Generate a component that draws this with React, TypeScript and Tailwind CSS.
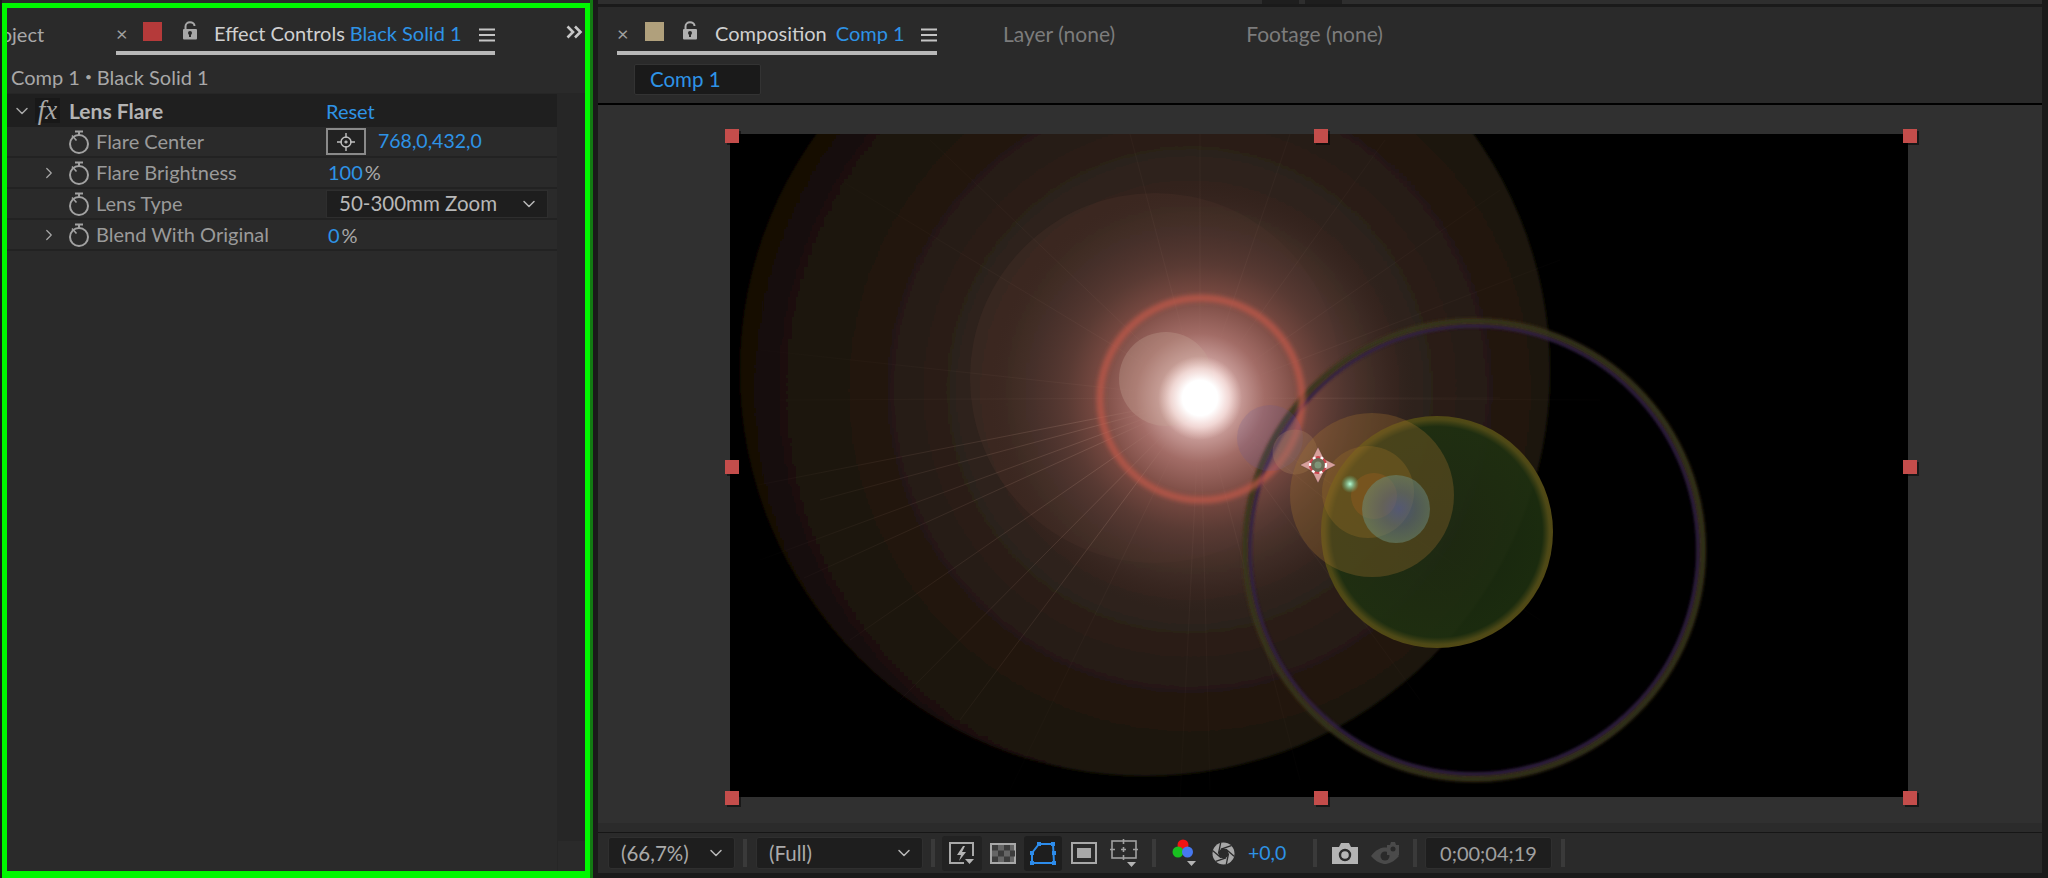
import { ChevronDown, ChevronRight } from "lucide-react";

const font = { fontFamily: "Lato, 'Noto Sans', sans-serif" };

function Hamburger() {
  return (
    <svg width="16" height="14" viewBox="0 0 16 14" className="mt-[6px] shrink-0">
      <path d="M0 1.500h16M0 7h16M0 12.500h16" stroke="#c4c4c4" strokeWidth="2" />
    </svg>
  );
}

function Lock({ color = "#a8a8a8" }: { color?: string }) {
  return (
    <svg width="16" height="19" viewBox="0 0 16 19" className="-mt-[3px] shrink-0">
      <path d="M3.500 9V5.500C3.500 3 5.500 1.200 8 1.200S12.500 3 12.500 5" fill="none" stroke={color} strokeWidth="2" />
      <rect x="1" y="8" width="14" height="10.500" rx="1" fill={color} />
      <circle cx="8" cy="12" r="2" fill="#2a2a2a" />
      <rect x="7" y="12" width="2" height="4" fill="#2a2a2a" />
    </svg>
  );
}

function Stopwatch() {
  return (
    <svg width="22" height="24" viewBox="0 0 22 24" className="shrink-0">
      <circle cx="11" cy="14" r="9" fill="none" stroke="#a2a2a2" strokeWidth="2" />
      <path d="M7 1.500h8M11 1.500v3.500" stroke="#a2a2a2" strokeWidth="2" />
      <path d="M8.500 10.500L4 5.500" stroke="#a2a2a2" strokeWidth="1.600" />
    </svg>
  );
}

function PropRow({
  label,
  twirl,
  children,
}: {
  label: string;
  twirl?: boolean;
  children: React.ReactNode;
}) {
  return (
    <div className="grid h-[31px] grid-cols-[319px_1fr] border-b-2 border-[#222222]">
      <div className="flex items-center pl-[36px]">
        <div className="flex w-[25px] items-center">
          {twirl && <ChevronRight size={18} strokeWidth={1.6} className="-ml-[3px] text-[#a8a8a8]" />}
        </div>
        <Stopwatch />
        <span className="mb-[1px] ml-[6px] text-[20px] leading-none text-[#9a9a9a]">{label}</span>
      </div>
      <div className="flex items-center">{children}</div>
    </div>
  );
}

function Sep({ className }: { className: string }) {
  return <div className={`h-[28px] w-[4px] shrink-0 bg-[#3a3a3a] ${className}`} />;
}

const handles = [
  "left-[-5px] top-[-5px]",
  "left-[584px] top-[-5px]",
  "left-[1173px] top-[-5px]",
  "left-[-5px] top-[326px]",
  "left-[1173px] top-[326px]",
  "left-[-5px] top-[657px]",
  "left-[584px] top-[657px]",
  "left-[1173px] top-[657px]",
];

const rays = [
  [758, 485], [804, 578], [760, 560], [820, 500], [850, 640], [900, 700], [960, 720],
  [1010, 790], [1180, 800], [1210, 790], [1300, 780], [1420, 700], [1540, 620], [1600, 400],
  [1500, 398], [1560, 260], [1500, 190], [1385, 140], [1290, 134], [1200, 134], [1130, 134],
  [930, 140], [840, 180], [760, 350], [780, 400], [1450, 600],
];

// six aperture blades, tangent to the hole
const blades = [0, 60, 120, 180, 240, 300].map((deg) => {
  const a = (deg * Math.PI) / 180;
  const b = ((deg + 75) * Math.PI) / 180;
  return `M${11.5 + 5 * Math.cos(a)} ${11.5 + 5 * Math.sin(a)}L${11.5 + 11 * Math.cos(b)} ${11.5 + 11 * Math.sin(b)}`;
});

function LensFlare() {
  return (
    <svg viewBox="730 134 1178 663" className="block h-full w-full">
      <defs>
        <radialGradient id="big" gradientUnits="userSpaceOnUse" cx="1190" cy="390" r="440">
          <stop offset="0" stopColor="#4a3029" />
          <stop offset="0.5" stopColor="#2e221c" />
          <stop offset="0.8" stopColor="#1e130b" />
          <stop offset="1" stopColor="#171006" />
        </radialGradient>
        <radialGradient id="core" gradientUnits="userSpaceOnUse" cx="1200" cy="398" r="215">
          <stop offset="0.1" stopColor="#e4bcb8" />
          <stop offset="0.2" stopColor="#c29490" />
          <stop offset="0.3" stopColor="#a26c66" />
          <stop offset="0.47" stopColor="#7a4a42" />
          <stop offset="0.62" stopColor="#5c3c35" stopOpacity="0.9" />
          <stop offset="0.85" stopColor="#45302a" stopOpacity="0.5" />
          <stop offset="1" stopColor="#3a2620" stopOpacity="0" />
        </radialGradient>
        <radialGradient id="white" gradientUnits="userSpaceOnUse" cx="1200" cy="398" r="42">
          <stop offset="0" stopColor="#ffffff" />
          <stop offset="0.42" stopColor="#ffffff" />
          <stop offset="0.7" stopColor="#fbe8e6" stopOpacity="0.7" />
          <stop offset="1" stopColor="#f0d4d0" stopOpacity="0" />
        </radialGradient>
        <radialGradient id="green" gradientUnits="userSpaceOnUse" cx="1437" cy="532" r="117">
          <stop offset="0" stopColor="#1c2c12" stopOpacity="0.8" />
          <stop offset="0.9" stopColor="#1e3010" stopOpacity="0.9" />
          <stop offset="0.96" stopColor="#4c4816" />
          <stop offset="1" stopColor="#554a14" />
        </radialGradient>
        <radialGradient id="blue" gradientUnits="userSpaceOnUse" cx="1399" cy="509" r="34">
          <stop offset="0" stopColor="#4a60b8" />
          <stop offset="0.5" stopColor="#566e88" />
          <stop offset="1" stopColor="#6a8a78" />
        </radialGradient>
        <radialGradient id="spot" gradientUnits="userSpaceOnUse" cx="1350" cy="484" r="9">
          <stop offset="0" stopColor="#b8ffd8" />
          <stop offset="1" stopColor="#60c090" stopOpacity="0" />
        </radialGradient>
        <radialGradient id="rayfade" gradientUnits="userSpaceOnUse" cx="1200" cy="398" r="480">
          <stop offset="0.1" stopColor="#c49a88" stopOpacity="0" />
          <stop offset="0.22" stopColor="#c49a88" stopOpacity="0.22" />
          <stop offset="1" stopColor="#c49a88" stopOpacity="0" />
        </radialGradient>
        <filter id="soft"><feGaussianBlur stdDeviation="1.500" /></filter>
        <filter id="softer"><feGaussianBlur stdDeviation="2" /></filter>
      </defs>
      <rect x="730" y="134" width="1178" height="663" fill="#000" />
      <circle cx="1145" cy="371" r="405" fill="url(#big)" filter="url(#soft)" />
      <circle cx="1155" cy="378" r="185" fill="#5a3c30" fillOpacity="0.22" />
      <circle cx="1200" cy="398" r="215" fill="url(#core)" />
      {rays.map(([x, y], i) => (
        <line key={i} x1="1200" y1="398" x2={x} y2={y} stroke="url(#rayfade)" strokeOpacity={i < 7 ? 1 : 0.3} strokeWidth="1" />
      ))}
      <circle cx="1474" cy="550" r="228" fill="none" stroke="#42341a" strokeOpacity="0.8" strokeWidth="8" filter="url(#soft)" />
      <circle cx="1474" cy="550" r="224" fill="none" stroke="#2f1f48" strokeWidth="3" filter="url(#soft)" />
      <circle cx="1474" cy="550" r="229" fill="none" stroke="#263820" strokeOpacity="0.8" strokeWidth="2" filter="url(#soft)" />
      <circle cx="1166" cy="379" r="47" fill="#c8a898" fillOpacity="0.3" />
      <circle cx="1200" cy="398" r="42" fill="url(#white)" />
      <circle cx="1201" cy="399" r="101" fill="none" stroke="#c2584a" strokeOpacity="0.72" strokeWidth="7" filter="url(#softer)" />
      <circle cx="1270" cy="438" r="33" fill="#6a5a96" fillOpacity="0.2" />
      <circle cx="1295" cy="452" r="22.500" fill="#b08860" fillOpacity="0.28" />
      <circle cx="1437" cy="532" r="116" fill="url(#green)" />
      <circle cx="1372" cy="495" r="82" fill="#a0702e" fillOpacity="0.32" />
      <circle cx="1368" cy="492" r="46" fill="#9a7028" fillOpacity="0.3" />
      <circle cx="1374" cy="496" r="23" fill="#a86020" fillOpacity="0.3" />
      <circle cx="1396" cy="509" r="34" fill="url(#blue)" fillOpacity="0.55" />
      <circle cx="1350" cy="484" r="9" fill="url(#spot)" />
      <g>
        <path d="M1318 447l6 12 12 6-12 6-6 12-6-12-12-6 12-6z" fill="#d8a09c" stroke="#2a1a1a" strokeOpacity="0.4" strokeWidth="0.6" />
        <circle cx="1318" cy="465" r="8" fill="#6b6b55" stroke="#c9444c" strokeWidth="2.200" />
        <circle cx="1318" cy="465" r="8" fill="none" stroke="#ffffff" strokeWidth="2.200" strokeDasharray="3 5" />
        <circle cx="1318" cy="465" r="3.500" fill="#7f9478" />
      </g>
    </svg>
  );
}

export default function App() {
  return (
    <div className="flex h-[878px] w-[2048px] overflow-hidden bg-[#1a1a1a]" style={font}>
      {/* Effect Controls panel */}
      <div className="ml-[2px] flex h-full w-[588px] shrink-0 flex-col">
        <div className="h-[3px] shrink-0 bg-[#2a2a2a]" />
        <div className="flex min-h-0 flex-1 flex-col overflow-hidden border-[5px] border-b-[7px] border-[#00f800] bg-[#2a2a2a]">
          <div className="flex h-[50px] shrink-0 items-start">
            <span className="ml-[-25px] mt-[13px] w-[134px] shrink-0 text-[20px] leading-[26px] text-[#a8a8a8]">Project</span>
            <div className="flex h-[47px] w-[379px] shrink-0 items-center border-b-4 border-[#b8b8b8] pb-[6px] pt-[10px]">
              <span className="mt-[3px] w-[27px] text-[20px] leading-none text-[#a0a0a0]">×</span>
              <div className="h-[19px] w-[19px] shrink-0 bg-[#b53a3a]" />
              <div className="ml-[20px]"><Lock /></div>
              <span className="ml-[16px] mt-[3px] whitespace-nowrap text-[20px] leading-none text-[#d0d0d0]">Effect Controls</span>
              <span className="ml-[5px] mt-[3px] whitespace-nowrap text-[20px] leading-none text-[#2e93e6]">Black Solid 1</span>
              <div className="ml-auto"><Hamburger /></div>
            </div>
            <svg width="17" height="14" viewBox="0 0 17 14" className="ml-[71px] mt-[17px] shrink-0">
              <path d="M1.500 1.500L7 7l-5.500 5.500M9 1.500L14.500 7 9 12.500" fill="none" stroke="#c8c8c8" strokeWidth="2.600" />
            </svg>
          </div>
          <div className="flex h-[36px] shrink-0 items-center border-b border-[#262626] pl-[4px] pt-[2px] text-[20px] text-[#a8a8a8]">
            Comp 1 <span className="mx-[5px] text-[12px]">•</span> Black Solid 1
          </div>
          <div className="flex min-h-0 flex-1">
            <div className="w-[550px] shrink-0">
              <div className="grid h-[33px] grid-cols-[319px_1fr] bg-[#1f1f1f]">
                <div className="flex items-center">
                  <ChevronDown size={20} strokeWidth={1.8} className="ml-[5px] text-[#a8a8a8]" />
                  <div className="ml-[3px] flex h-[25px] w-[25px] items-center justify-center bg-[#181818] text-[27px] italic leading-none text-[#a8a8a8]" style={{ fontFamily: "'Liberation Serif', serif" }}>
                    fx
                  </div>
                  <span className="ml-[9px] text-[21px] font-bold leading-none text-[#b4b4b4]">Lens Flare</span>
                </div>
                <div className="flex items-center text-[20px] leading-none text-[#2e93e6]">Reset</div>
              </div>
              <PropRow label="Flare Center">
                <div className="flex h-[27px] w-[40px] shrink-0 items-center justify-center border-2 border-[#8a8a8a] bg-[#222222]">
                  <svg width="18" height="18" viewBox="0 0 18 18">
                    <circle cx="9" cy="9" r="5" fill="none" stroke="#c0c0c0" strokeWidth="1.400" />
                    <path d="M0 9h5M13 9h5M9 0v5M9 13v5M7.400 9h3.200M9 7.400v3.200" stroke="#c0c0c0" strokeWidth="1.400" />
                  </svg>
                </div>
                <span className="mb-[1px] ml-[12px] text-[19.5px] leading-none text-[#2e93e6]">768,0,432,0</span>
              </PropRow>
              <PropRow label="Flare Brightness" twirl>
                <span className="mb-[1px] ml-[2px] text-[20px] leading-none text-[#2e93e6]">100</span>
                <span className="mb-[1px] ml-[2px] text-[20px] leading-none text-[#a8a8a8]">%</span>
              </PropRow>
              <PropRow label="Lens Type">
                <div className="flex h-[28px] w-[222px] items-center justify-between border border-[#2e2e2e] bg-[#1e1e1e] pl-[12px] pr-[8px]">
                  <span className="text-[20.5px] leading-none text-[#b8b8b8]">50-300mm Zoom</span>
                  <ChevronDown size={20} strokeWidth={1.8} className="text-[#b8b8b8]" />
                </div>
              </PropRow>
              <PropRow label="Blend With Original" twirl>
                <span className="ml-[2px] text-[20px] leading-none text-[#2e93e6]">0</span>
                <span className="ml-[2px] text-[20px] leading-none text-[#a8a8a8]">%</span>
              </PropRow>
            </div>
            <div className="flex flex-1 flex-col justify-end border-l border-[#262626] bg-[#262626]">
              <div className="h-[30px] bg-[#2a2a2a]" />
            </div>
          </div>
        </div>
      </div>
      <div className="h-full w-[3px] shrink-0 bg-[#127a12]" />

      {/* Composition panel */}
      <div className="ml-[5px] flex h-full w-[1444px] shrink-0 flex-col">
        <div className="flex h-[4px] shrink-0 bg-[#2e2e2e]">
          <div className="ml-[664px] h-full w-[37px] bg-[#1e1e1e]" />
          <div className="ml-[6px] h-full w-[37px] bg-[#1e1e1e]" />
        </div>
        <div className="h-[3px] shrink-0" />
        <div className="h-[96px] shrink-0 bg-[#2a2a2a]">
          <div className="flex h-[48px] items-start">
            <div className="ml-[19px] flex h-[48px] w-[320px] shrink-0 items-center border-b-4 border-[#b8b8b8] pb-[5px] pt-[10px]">
              <span className="mt-[3px] w-[28px] text-[20px] leading-none text-[#a0a0a0]">×</span>
              <div className="h-[19px] w-[19px] shrink-0 bg-[#b0a07c]" />
              <div className="ml-[18px]"><Lock color="#b0b0b0" /></div>
              <span className="ml-[17px] mt-[3px] text-[20px] leading-none text-[#d0d0d0]">Composition</span>
              <span className="ml-[9px] mt-[3px] whitespace-nowrap text-[20px] leading-none text-[#2e93e6]">Comp 1</span>
              <div className="ml-auto"><Hamburger /></div>
            </div>
            <span className="ml-[66px] mt-[16px] whitespace-nowrap text-[21px] leading-none text-[#7c7c7c]">Layer (none)</span>
            <span className="ml-[131px] mt-[16px] whitespace-nowrap text-[21px] leading-none text-[#7c7c7c]">Footage (none)</span>
          </div>
          <div className="ml-[36px] mt-[9px] flex h-[31px] w-[127px] items-center rounded-[2px] border border-[#333333] bg-[#1a1a1a] pl-[15px] text-[20.5px] leading-none text-[#2e93e6]">
            Comp 1
          </div>
        </div>
        <div className="h-[2px] shrink-0 bg-black" />
        <div className="h-[718px] shrink-0 bg-[#303030] pl-[132px] pt-[29px]">
          <div className="relative h-[663px] w-[1178px]">
            <LensFlare />
            {handles.map((pos) => (
              <div key={pos} className={`absolute h-[14px] w-[14px] bg-[#c44d4b] shadow-[2px_2px_0_rgba(0,0,0,0.5)] ${pos}`} />
            ))}
          </div>
        </div>
        <div className="h-[9px] shrink-0 bg-[#2b2b2b]" />
        <div className="h-[1px] shrink-0 bg-[#161616]" />

        {/* Viewer toolbar */}
        <div className="flex h-[40px] shrink-0 items-center bg-[#2a2a2a]">
          <div className="ml-[10px] flex h-[32px] w-[127px] shrink-0 items-center justify-between rounded-[3px] border border-[#2f2f2f] bg-[#1e1e1e] pl-[12px] pr-[8px] text-[20.5px] leading-none text-[#aaaaaa]">
            (66,7%)
            <ChevronDown size={20} strokeWidth={1.8} className="text-[#b8b8b8]" />
          </div>
          <Sep className="ml-[8px]" />
          <div className="ml-[9px] flex h-[32px] w-[167px] shrink-0 items-center justify-between rounded-[3px] border border-[#2f2f2f] bg-[#1e1e1e] pl-[12px] pr-[8px] text-[20.5px] leading-none text-[#aaaaaa]">
            (Full)
            <ChevronDown size={20} strokeWidth={1.8} className="text-[#b8b8b8]" />
          </div>
          <Sep className="ml-[8px]" />
          <div className="ml-[7px] flex h-[35px] w-[40px] shrink-0 items-center justify-center rounded-[3px] bg-[#222222]">
            <svg width="26" height="23" viewBox="0 0 26 23">
              <path d="M15 21H1V1h23v13" fill="none" stroke="#a8a8a8" strokeWidth="2" />
              <path d="M14 4l-6 9h4l-2 6 7-9h-4l3-6z" fill="#b4b4b4" />
              <path d="M16 17h9l-4.500 5z" fill="#b4b4b4" />
            </svg>
          </div>
          <svg width="26" height="21" viewBox="0 0 26 21" className="ml-[8px] shrink-0">
            <rect x="1" y="1" width="24" height="19" fill="#666666" stroke="#a8a8a8" strokeWidth="2" />
            <path d="M2 2h6v5.500H2zM14 2h6v5.500h-6zM8 7.500h6v6H8zM20 7.500h5v6h-5zM2 13.500h6V19H2zM14 13.500h6V19h-6z" fill="#3c3c3c" />
          </svg>
          <div className="ml-[8px] flex h-[35px] w-[38px] shrink-0 items-center justify-center rounded-[3px] bg-[#1e1e1e]">
            <svg width="26" height="23" viewBox="0 0 26 23">
              <path d="M9 2h14l1 19H2V11z" fill="none" stroke="#2d8ceb" strokeWidth="2" />
              <path d="M7 0h4v4H7zM21 0h4v4h-4zM22 9h4v4h-4zM0 9h4v4H0zM0 19h4v4H0zM22 19h4v4h-4z" fill="#2d8ceb" />
            </svg>
          </div>
          <svg width="26" height="22" viewBox="0 0 26 22" className="ml-[9px] shrink-0">
            <rect x="1" y="1" width="24" height="20" fill="none" stroke="#a8a8a8" strokeWidth="2" />
            <rect x="6" y="6" width="14" height="10" fill="#a8a8a8" />
          </svg>
          <svg width="28" height="28" viewBox="0 0 28 28" className="ml-[13px] shrink-0">
            <rect x="2" y="2" width="24" height="17" fill="none" stroke="#a0a0a0" strokeWidth="1.600" />
            <path d="M13.500 0v5M13.500 16v5M0 10.500h5M23 10.500h5M11 10.500h5M13.500 8v5" stroke="#a0a0a0" strokeWidth="1.600" />
            <path d="M17 23h9l-4.500 5z" fill="#b4b4b4" />
          </svg>
          <Sep className="ml-[14px]" />
          <svg width="24" height="28" viewBox="0 0 24 28" className="ml-[16px] shrink-0">
            <circle cx="11" cy="6" r="5.500" fill="#f01414" />
            <circle cx="6" cy="13" r="5.500" fill="#18c020" />
            <circle cx="15.500" cy="13" r="5.500" fill="#4678f0" />
            <path d="M15 22h9l-4.500 5z" fill="#b4b4b4" />
          </svg>
          <svg width="23" height="23" viewBox="0 0 23 23" className="ml-[16px] shrink-0">
            <circle cx="11.500" cy="11.500" r="11" fill="#a8a8a8" />
            {blades.map((d) => (
              <path key={d} d={d} stroke="#2a2a2a" strokeWidth="1.300" />
            ))}
            <circle cx="11.500" cy="11.500" r="5" fill="#2a2a2a" />
          </svg>
          <span className="ml-[13px] w-[38px] shrink-0 text-[19.5px] leading-none text-[#2e93e6]">+0,0</span>
          <Sep className="ml-[27px]" />
          <svg width="26" height="21" viewBox="0 0 26 21" className="ml-[15px] shrink-0">
            <path d="M0 4h7l2-4h8l2 4h7v17H0z" fill="#b4b4b4" />
            <circle cx="13" cy="12" r="5" fill="#b4b4b4" stroke="#2a2a2a" strokeWidth="2.400" />
          </svg>
          <svg width="28" height="22" viewBox="0 0 28 22" className="ml-[13px] shrink-0">
            <path d="M0 14C5 7 11 5.500 14 5.500S23 7 28 14c-5 6-11 8-14 8S5 20 0 14z" fill="#4a4a4a" />
            <circle cx="14" cy="14" r="4.500" fill="#2a2a2a" />
            <path d="M16 3h3l1-3h4l1 3h3v10h-12z" fill="#4a4a4a" />
            <circle cx="22" cy="7" r="2.500" fill="#2a2a2a" />
          </svg>
          <Sep className="ml-[14px]" />
          <div className="ml-[8px] flex h-[32px] w-[127px] shrink-0 items-center justify-center rounded-[3px] border border-[#2f2f2f] bg-[#1e1e1e] text-[20px] leading-none text-[#a0a0a0]">
            0;00;04;19
          </div>
          <Sep className="ml-[9px]" />
        </div>
      </div>
    </div>
  );
}
